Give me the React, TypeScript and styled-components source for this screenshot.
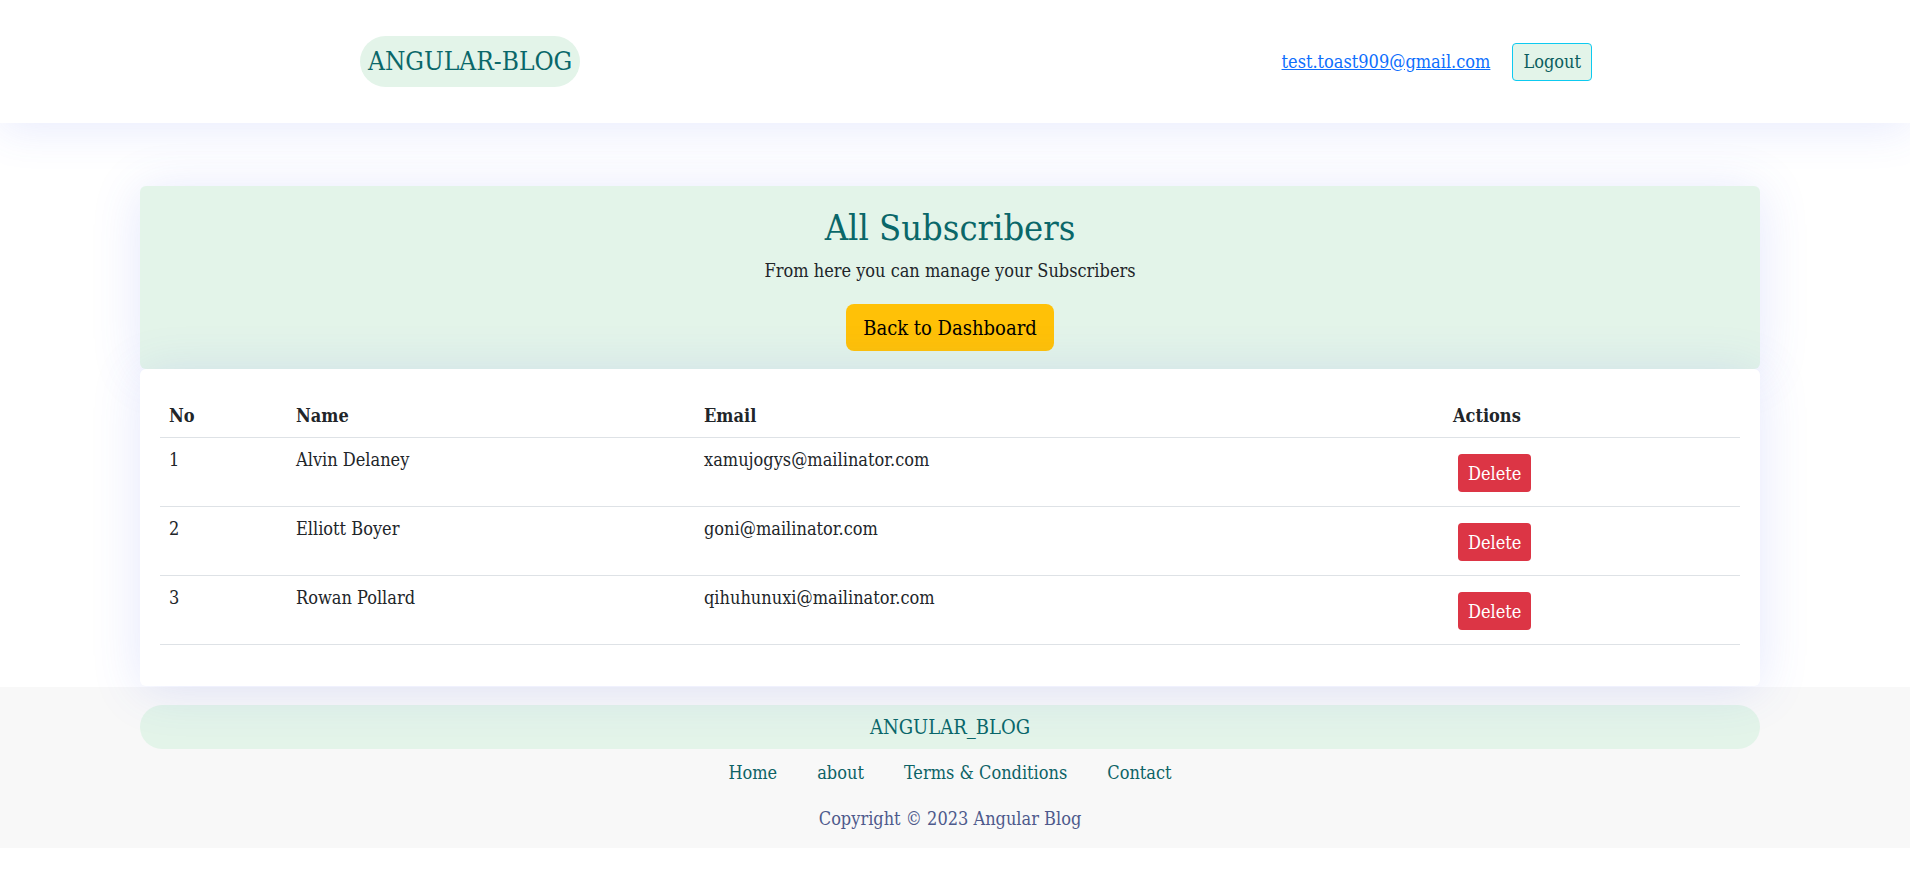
import React from "react";
import styled, { createGlobalStyle } from "styled-components";

const FONT = `"DejaVu Serif Condensed", "DejaVu Serif", "Liberation Serif", serif`;
const TEAL = "#0a6769";
const MINT = "#e3f4e9";
const SHADOW = "0 4px 50px rgba(75, 95, 235, 0.15)";

const GlobalStyle = createGlobalStyle`
  html, body { margin: 0; padding: 0; background: #ffffff; }
  body {
    font-family: ${FONT};
    font-stretch: condensed;
    font-size: 18px;
    line-height: 27px;
    color: #212529;
  }
  * { box-sizing: border-box; }
  button { font-family: inherit; font-stretch: inherit; cursor: pointer; }
`;

const Header = styled.header`
  position: relative;
  z-index: 2;
  height: 123px;
  display: flex;
  align-items: center;
  justify-content: space-between;
  padding: 0 318px 0 360px;
  background: #ffffff;
  box-shadow: 0 8px 40px rgba(75, 95, 235, 0.12);
`;

const Logo = styled.a`
  display: inline-flex;
  align-items: center;
  height: 51px;
  padding: 0 8px;
  border-radius: 26px;
  background: ${MINT};
  color: ${TEAL};
  font-size: 26px;
  text-decoration: none;
`;

const UserNav = styled.nav`
  display: flex;
  align-items: center;
  gap: 22px;
`;

const EmailLink = styled.a`
  color: #0d6efd;
  text-decoration: underline;
  font-size: 18px;
`;

const LogoutButton = styled.button`
  height: 38px;
  padding: 0 10px;
  border: 1px solid #0dcaf0;
  border-radius: 4px;
  background: ${MINT};
  color: #0b5e5e;
  font-size: 18px;
`;

const Main = styled.main`
  padding: 63px 150px 0 140px;
`;

const HeroCard = styled.section`
  position: relative;
  display: flex;
  flex-direction: column;
  align-items: center;
  padding: 20px 0 18px;
  background: ${MINT};
  border-radius: 6px;
  box-shadow: ${SHADOW};
`;

const Title = styled.h2`
  margin: 0;
  font-size: 36px;
  line-height: 43px;
  font-weight: 400;
  color: ${TEAL};
`;

const Subtitle = styled.p`
  margin: 8px 0 0;
  font-size: 18px;
  line-height: 27px;
`;

const BackButton = styled.button`
  margin-top: 20px;
  height: 47px;
  padding: 0 17px;
  border: none;
  border-radius: 8px;
  background: #ffc107;
  color: #000000;
  font-size: 20px;
`;

const TableCard = styled.section`
  position: relative;
  padding: 25px 20px 24px;
  background: #ffffff;
  border-radius: 6px;
  box-shadow: ${SHADOW};
`;

const Table = styled.table`
  width: 100%;
  table-layout: fixed;
  border-collapse: collapse;
  margin-bottom: 17px;
`;

const Th = styled.th`
  padding: 8px 9px;
  text-align: left;
  font-weight: 700;
  line-height: 27px;
  border-bottom: 1px solid #dee2e6;
`;

const Td = styled.td`
  padding: 8px 9px;
  vertical-align: top;
  line-height: 27px;
  border-bottom: 1px solid #dee2e6;
`;

const DeleteButton = styled.button`
  display: block;
  margin: 8px 0 6px 5px;
  height: 38px;
  padding: 0 10px;
  border: none;
  border-radius: 4px;
  background: #dc3545;
  color: #ffffff;
  font-size: 18px;
`;

const Footer = styled.footer`
  margin-top: 1px;
  padding: 18px 150px 16px 140px;
  background: #f8f8f8;
`;

const FooterBrand = styled.div`
  height: 44px;
  display: flex;
  align-items: center;
  justify-content: center;
  border-radius: 22px;
  background: ${MINT};
  color: ${TEAL};
  font-size: 20px;
`;

const FooterLinks = styled.nav`
  margin-top: 10px;
  display: flex;
  justify-content: center;
  gap: 40px;
`;

const FooterLink = styled.a`
  color: #0d6366;
  text-decoration: none;
  font-size: 18px;
  line-height: 27px;
`;

const Copyright = styled.p`
  margin: 19px 0 0;
  text-align: center;
  color: #4e5a8c;
  font-size: 18px;
  line-height: 27px;
`;

const subscribers = [
  { no: 1, name: "Alvin Delaney", email: "xamujogys@mailinator.com" },
  { no: 2, name: "Elliott Boyer", email: "goni@mailinator.com" },
  { no: 3, name: "Rowan Pollard", email: "qihuhunuxi@mailinator.com" },
];

export default function App() {
  return (
    <>
      <GlobalStyle />
      <Header>
        <Logo href="#">ANGULAR-BLOG</Logo>
        <UserNav>
          <EmailLink href="#">test.toast909@gmail.com</EmailLink>
          <LogoutButton>Logout</LogoutButton>
        </UserNav>
      </Header>
      <Main>
        <HeroCard>
          <Title>All Subscribers</Title>
          <Subtitle>From here you can manage your Subscribers</Subtitle>
          <BackButton>Back to Dashboard</BackButton>
        </HeroCard>
        <TableCard>
          <Table>
            <colgroup>
              <col style={{ width: "127px" }} />
              <col style={{ width: "408px" }} />
              <col style={{ width: "749px" }} />
              <col />
            </colgroup>
            <thead>
              <tr>
                <Th>No</Th>
                <Th>Name</Th>
                <Th>Email</Th>
                <Th>Actions</Th>
              </tr>
            </thead>
            <tbody>
              {subscribers.map((s) => (
                <tr key={s.no}>
                  <Td>{s.no}</Td>
                  <Td>{s.name}</Td>
                  <Td>{s.email}</Td>
                  <Td>
                    <DeleteButton>Delete</DeleteButton>
                  </Td>
                </tr>
              ))}
            </tbody>
          </Table>
        </TableCard>
      </Main>
      <Footer>
        <FooterBrand>ANGULAR_BLOG</FooterBrand>
        <FooterLinks>
          <FooterLink href="#">Home</FooterLink>
          <FooterLink href="#">about</FooterLink>
          <FooterLink href="#">Terms &amp; Conditions</FooterLink>
          <FooterLink href="#">Contact</FooterLink>
        </FooterLinks>
        <Copyright>Copyright © 2023 Angular Blog</Copyright>
      </Footer>
    </>
  );
}
